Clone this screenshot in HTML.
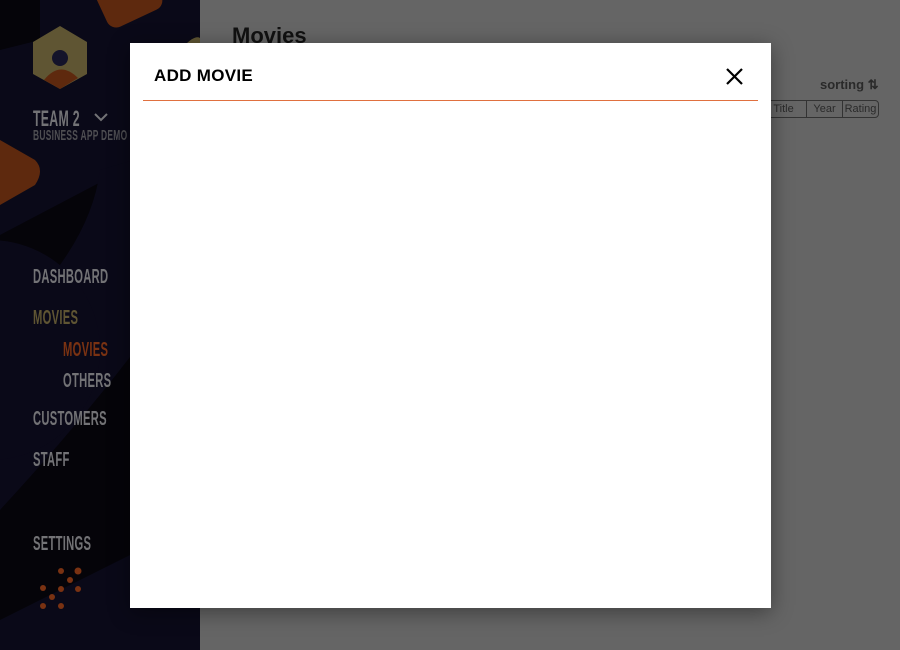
<!DOCTYPE html>
<html><head><meta charset="utf-8"><style>
*{margin:0;padding:0;box-sizing:border-box}
body{width:900px;height:650px;overflow:hidden;position:relative;background:#6a6a6a;font-family:"Liberation Sans",sans-serif}
#side{position:absolute;left:0;top:0;width:200px;height:650px;background:#050409;overflow:hidden}
.nav{position:absolute;font-family:"Liberation Sans",sans-serif;font-weight:bold;font-size:20px;color:#737376;transform:scaleX(.56);transform-origin:left top;letter-spacing:0.5px;white-space:nowrap}
#main{position:absolute;left:200px;top:0;right:0;bottom:0;background:#656565}
#modal{position:absolute;left:130px;top:43px;width:641px;height:565px;background:#fff;box-shadow:0 4px 20px rgba(0,0,0,.4)}
</style></head><body>
<div id="side">
<svg width="200" height="650" style="position:absolute;left:0;top:0">
<rect x="0" y="0" width="200" height="650" fill="#0a0918"/>
<path d="M0,235 L200,130 L200,650 L0,650 Z" fill="#050409"/>
<path d="M0,0 L40,0 L40,40 L0,50 Z" fill="#050409"/>
<rect x="100" y="-30" width="60" height="50" rx="10" fill="#5e290e" transform="rotate(-25 130 0)"/>
<path d="M0,140 L35,160 Q45,170 35,185 L0,205 Z" fill="#5e290e"/>
<path d="M0,330 Q90,250 100,170 L200,140 L200,260 Q120,380 0,510 Z" fill="#0a0918"/>
<circle cx="-10" cy="350" r="110" fill="#0a0918"/>
<path d="M0,620 L200,520 L200,650 L0,650 Z" fill="#0a0918"/>
<polygon points="60,26 87,42 87,74 60,89 33,74 33,42" fill="#5f5533"/>
<circle cx="60" cy="58" r="8" fill="#14132a"/>
<path d="M44,80 Q60,60 78,78 L60,89 Z" fill="#5e290e"/>
<path d="M185,45 Q195,35 200,38 L200,55 Z" fill="#5f5533"/>
<g fill="#7a3212"><circle cx="61" cy="571" r="3"/><circle cx="78" cy="571" r="3.5"/><circle cx="70" cy="580" r="3"/><circle cx="43" cy="588" r="3"/><circle cx="61" cy="589" r="3"/><circle cx="78" cy="589" r="3"/><circle cx="52" cy="597" r="3"/><circle cx="43" cy="606" r="3"/><circle cx="61" cy="606" r="3"/></g>
<path d="M95,114 L101,120 L107,114" stroke="#737376" stroke-width="2" fill="none"/>
</svg>
<div class="nav" style="left:33px;top:106px;font-size:22px">TEAM 2</div>
<div class="nav" style="left:33px;top:127px;font-size:15px;color:#4e4e52">BUSINESS APP DEMO</div>
<div class="nav" style="left:33px;top:266px">DASHBOARD</div>
<div class="nav" style="left:33px;top:307px;color:#5f5533">MOVIES</div>
<div class="nav" style="left:63px;top:339px;color:#7a3212">MOVIES</div>
<div class="nav" style="left:63px;top:370px">OTHERS</div>
<div class="nav" style="left:33px;top:408px">CUSTOMERS</div>
<div class="nav" style="left:33px;top:449px">STAFF</div>
<div class="nav" style="left:33px;top:533px">SETTINGS</div>
</div>
<div id="main">
<div style="position:absolute;left:32px;top:23px;font-size:22px;font-weight:bold;color:#111">Movies</div>
<div style="position:absolute;left:620px;top:77px;font-size:13px;font-weight:bold;color:#2a2a2a">sorting ⇅</div>
<div style="position:absolute;left:560px;top:100px;width:119px;height:18px;border:1px solid #333;border-radius:4px;display:flex;font-size:11px;color:#2a2a2a">
<span style="width:46px;text-align:center;border-right:1px solid #333;line-height:16px">Title</span>
<span style="width:36px;text-align:center;border-right:1px solid #333;line-height:16px">Year</span>
<span style="flex:1;text-align:center;line-height:16px">Rating</span></div>
</div>
<div id="modal">
<div style="position:absolute;left:24px;top:23px;font-size:17px;font-weight:bold;letter-spacing:.3px;color:#000">ADD MOVIE</div>
<svg style="position:absolute;left:596px;top:25px" width="17" height="17"><path d="M1,1 L16,16 M16,1 L1,16" stroke="#000" stroke-width="2.2"/></svg>
<div style="position:absolute;left:13px;right:13px;top:57px;height:1px;background:#e0703f"></div>
</div>
</body></html>
